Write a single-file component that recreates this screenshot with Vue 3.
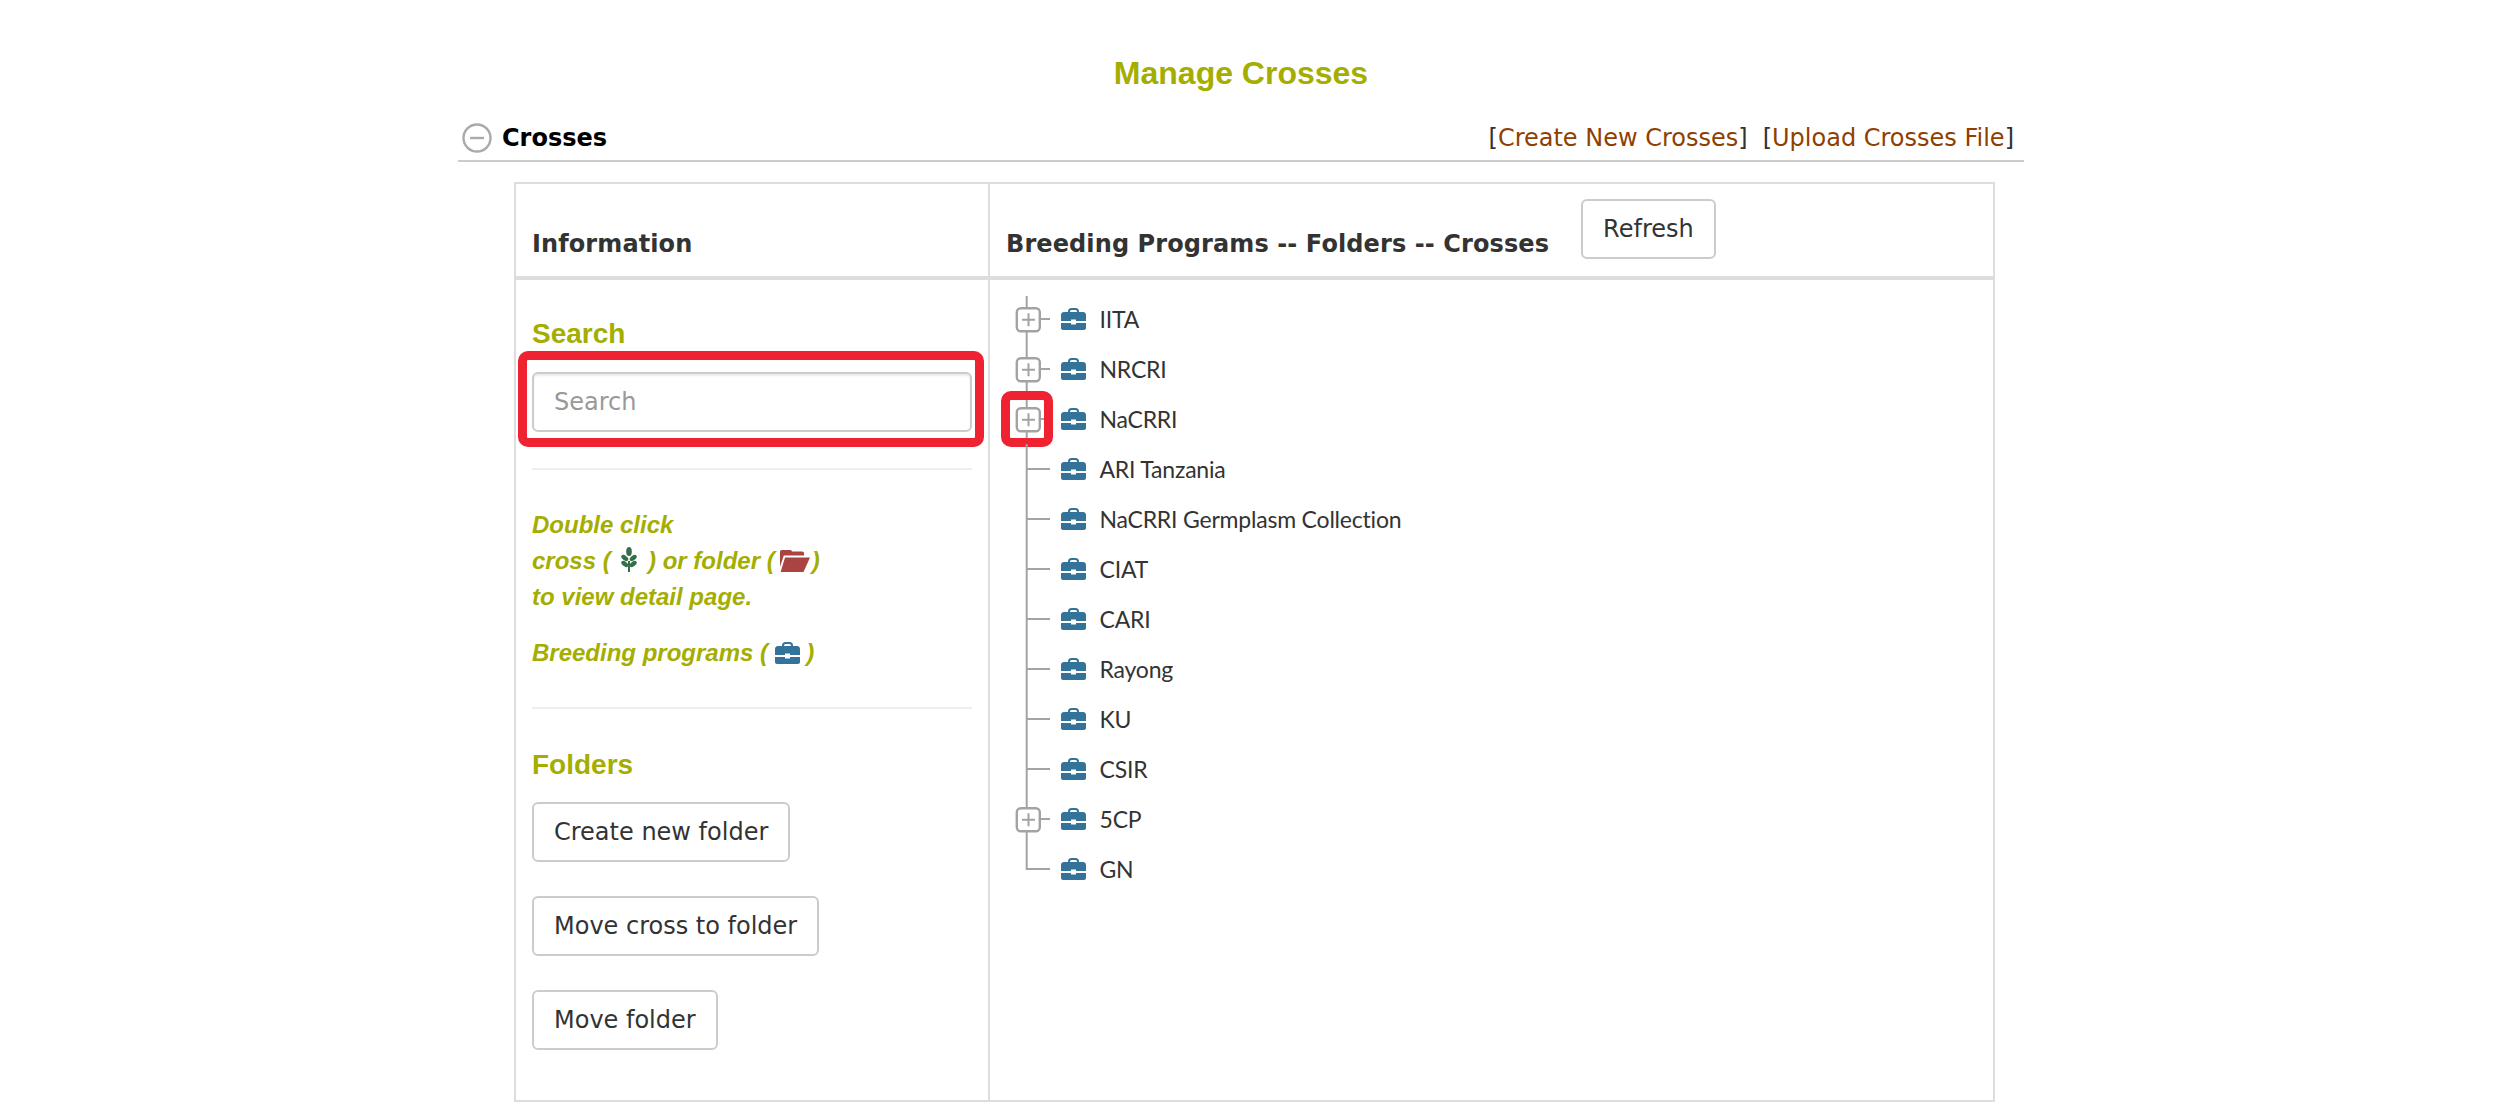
<script setup>
const programs = [
  { name: 'IITA', toggle: true },
  { name: 'NRCRI', toggle: true },
  { name: 'NaCRRI', toggle: true, marked: true },
  { name: 'ARI Tanzania' },
  { name: 'NaCRRI Germplasm Collection' },
  { name: 'CIAT' },
  { name: 'CARI' },
  { name: 'Rayong' },
  { name: 'KU' },
  { name: 'CSIR' },
  { name: '5CP', toggle: true },
  { name: 'GN', last: true }
];

const folderButtons = ['Create new folder', 'Move cross to folder', 'Move folder'];
</script>

<template>
  <div class="page">
    <h1 class="page-title">Manage Crosses</h1>

    <div class="section-head">
      <div class="section-name">
        <svg class="collapse-icon" viewBox="0 0 30 30">
          <circle cx="15" cy="15" r="13.500" fill="none" stroke="#aaa" stroke-width="2.400" />
          <path d="M8 15h14" stroke="#aaa" stroke-width="2.400" />
        </svg>
        <span>Crosses</span>
      </div>
      <div class="section-links">
        [<a>Create New Crosses</a>]<span class="link-gap"></span>[<a>Upload Crosses File</a>]
      </div>
    </div>

    <div class="panel">
      <div class="panel-th">Information</div>
      <div class="panel-th">
        Breeding Programs -- Folders -- Crosses
        <button class="btn refresh">Refresh</button>
      </div>

      <div class="info-col">
        <h3 class="info-title">Search</h3>
        <div class="search-wrap">
          <input class="search-input" type="text" placeholder="Search">
          <div class="red-mark search-mark"></div>
        </div>

        <hr class="info-rule first-rule">

        <div class="note">
          <div>Double click</div>
          <div>
            cross (
            <svg class="plant" viewBox="0 0 16 25" fill="#33704a">
              <ellipse cx="8" cy="4.500" rx="2.800" ry="4.500" />
              <ellipse cx="3.800" cy="11" rx="4" ry="2.300" transform="rotate(38 3.800 11)" />
              <ellipse cx="12.200" cy="11" rx="4" ry="2.300" transform="rotate(-38 12.200 11)" />
              <ellipse cx="3.800" cy="17" rx="4" ry="2.300" transform="rotate(38 3.800 17)" />
              <ellipse cx="12.200" cy="17" rx="4" ry="2.300" transform="rotate(-38 12.200 17)" />
              <rect x="7" y="14" width="2" height="11" />
            </svg>
            ) or folder (<svg class="folder" viewBox="0 0 30 22">
              <path d="M0 3.500V1.800C0 .8.800 0 1.800 0h8.400c.9 0 1.500.5 1.800 1.500h10.200c1 0 1.800.8 1.800 1.800v2.200H3.800L0 17z" fill="#a94442" />
              <path d="M5 7.500H30L23.500 22H.6z" fill="#a94442" />
            </svg>)
          </div>
          <div>to view detail page.</div>
          <div class="note-gap">
            Breeding programs (<svg class="case case-note" viewBox="0 0 25 22">
              <path d="M8 5V3.500C8 2 9 1 10.500 1h4C16 1 17 2 17 3.500V5" fill="none" stroke="#33739a" stroke-width="2" />
              <path d="M0 7c0-1.700 1.300-3 3-3h19c1.700 0 3 1.300 3 3v6H15v-1.500h-5V13H0z" fill="#33739a" />
              <path d="M0 15h10v1.500h5V15h10v5c0 1.100-.9 2-2 2H2c-1.100 0-2-.9-2-2z" fill="#33739a" />
            </svg> )
          </div>
        </div>

        <hr class="info-rule">

        <h3 class="info-title folders-title">Folders</h3>
        <div class="folder-buttons">
          <button v-for="label in folderButtons" :key="label" class="btn">{{ label }}</button>
        </div>
      </div>

      <div class="tree-col">
        <ul class="tree">
          <li v-for="(item, i) in programs" :key="item.name" class="tree-row">
            <svg class="gutter" viewBox="0 0 50 50">
              <path :d="item.last ? 'M25.700 0V25H49' : i === 0 ? 'M25.700 2V50M25.700 25H49' : 'M25.700 0V50M25.700 25H49'" fill="none" stroke="#a3a3a3" stroke-width="2" />
              <g v-if="item.toggle">
                <rect x="15.800" y="14.200" width="23" height="23" rx="4" fill="#fff" stroke="#a3a3a3" stroke-width="2.400" />
                <path d="M21 25.700h13M27.500 19.200v13" stroke="#a3a3a3" stroke-width="2" />
              </g>
            </svg>
            <svg class="case" viewBox="0 0 25 22">
              <path d="M8 5V3.500C8 2 9 1 10.500 1h4C16 1 17 2 17 3.500V5" fill="none" stroke="#33739a" stroke-width="2" />
              <path d="M0 7c0-1.700 1.300-3 3-3h19c1.700 0 3 1.300 3 3v6H15v-1.500h-5V13H0z" fill="#33739a" />
              <path d="M0 15h10v1.500h5V15h10v5c0 1.100-.9 2-2 2H2c-1.100 0-2-.9-2-2z" fill="#33739a" />
            </svg>
            <span class="tree-label">{{ item.name }}</span>
            <div v-if="item.marked" class="red-mark tree-mark"></div>
          </li>
        </ul>
      </div>
    </div>
  </div>
</template>

<style>
html, body {
  margin: 0;
  background: #fff;
}
</style>

<style scoped>
.page {
  width: 1566px;
  margin-left: 458px;
  font-family: "DejaVu Sans", sans-serif;
  color: #333;
}

.page-title {
  margin: 0;
  padding-top: 55px;
  height: 63px;
  font: bold 32px/37px "Liberation Sans", sans-serif;
  color: #a4ae00;
  text-align: center;
}

.section-head {
  display: flex;
  justify-content: space-between;
  align-items: center;
  padding-bottom: 3px;
  box-sizing: border-box;
  height: 44px;
  border-bottom: 2px solid #ccc;
}

.section-name {
  display: flex;
  align-items: center;
  gap: 10px;
  padding-left: 4px;
  font-size: 24px;
  font-weight: 700;
  color: #000;
}

.collapse-icon {
  width: 30px;
  height: 30px;
}

.section-links {
  padding-right: 10px;
  font-size: 24px;
  color: #333;
}

.section-links a {
  color: #8f3f00;
}

.link-gap {
  display: inline-block;
  width: 15px;
}

.panel {
  display: grid;
  grid-template-columns: 474px 1fr;
  width: 1481px;
  margin: 20px 0 0 56px;
  border: 2px solid #ddd;
  box-sizing: border-box;
}

.panel-th {
  display: flex;
  align-items: flex-end;
  height: 77px;
  padding: 0 16px 15px;
  border-bottom: 4px solid #ddd;
  font-size: 24px;
  font-weight: 700;
  letter-spacing: 0.1px;
  line-height: 34px;
}

.panel-th:first-child {
  border-right: 2px solid #ddd;
}

.btn {
  display: block;
  height: 60px;
  padding: 0 20px;
  box-sizing: border-box;
  background: #fff;
  border: 2px solid #ccc;
  border-radius: 6px;
  font: 24px "DejaVu Sans", sans-serif;
  letter-spacing: 0;
  color: #333;
}

.refresh {
  margin: 0 0 2px 32px;
}

.info-col {
  padding: 38px 16px 50px;
  border-right: 2px solid #ddd;
}

.info-title {
  margin: 0;
  font: bold 28px/32px "Liberation Sans", sans-serif;
  color: #a4ae00;
}

.search-wrap {
  position: relative;
  margin-top: 22px;
}

.search-input {
  display: block;
  width: 100%;
  height: 60px;
  padding: 0 20px;
  box-sizing: border-box;
  border: 2px solid #ccc;
  border-radius: 6px;
  font: 24px "DejaVu Sans", sans-serif;
  color: #555;
  box-shadow: inset 0 2px 2px rgba(0, 0, 0, 0.075);
}

.search-input::placeholder {
  color: #999;
}

.red-mark {
  position: absolute;
  box-sizing: border-box;
  border: 9px solid #ee2230;
  border-radius: 10px;
}

.search-mark {
  top: -21px;
  bottom: -15px;
  left: -14px;
  right: -12px;
}

.info-rule {
  margin: 0;
  border: 0;
  border-top: 2px solid #eee;
}

.first-rule {
  margin-top: 36px;
}

.note {
  padding: 37px 0 36px;
  font: italic bold 24px/36px "Liberation Sans", sans-serif;
  color: #a4ae00;
}

.note svg {
  vertical-align: -3px;
}

.plant {
  width: 16px;
  height: 25px;
  margin: 0 4px;
}

.folder {
  width: 30px;
  height: 22px;
  margin: 0 2px 0 5px;
}

.note-gap {
  margin-top: 20px;
}

.folders-title {
  margin-top: 40px;
}

.folder-buttons {
  display: flex;
  flex-direction: column;
  align-items: flex-start;
  gap: 34px;
  margin-top: 21px;
}

.tree {
  list-style: none;
  margin: 0;
  padding: 14px 0 0 11px;
}

.tree-row {
  position: relative;
  display: flex;
  align-items: center;
  height: 50px;
}

.gutter {
  flex: none;
  width: 50px;
  height: 50px;
}

.case {
  flex: none;
  width: 25px;
  height: 22px;
  margin-left: 10px;
}

.note .case-note {
  margin-left: 6.500px;
}

.tree-label {
  margin-left: 13.500px;
  font-family: Lato, sans-serif;
  font-size: 23px;
  letter-spacing: -0.2px;
  color: #333;
}

.tree-mark {
  top: -3px;
  left: 0;
  width: 52px;
  height: 56px;
}
</style>
